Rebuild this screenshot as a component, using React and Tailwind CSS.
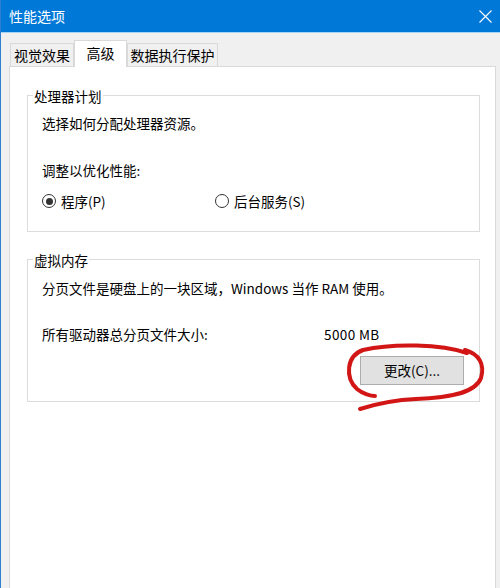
import React from "react";

const font = { fontFamily: '"Noto Sans CJK SC", "Noto Sans", sans-serif' };

function Radio({ checked, label }) {
  return (
    <div className="flex items-center gap-[5px]">
      <span className="w-[14px] h-[14px] rounded-full border border-[#333333] bg-white flex items-center justify-center">
        {checked && <span className="w-[7px] h-[7px] rounded-full bg-[#333333]" />}
      </span>
      <span>{label}</span>
    </div>
  );
}

function Group({ title, className, children }) {
  return (
    <div className={"relative border border-[#dcdcdc] " + className}>
      <span className="absolute left-[5px] top-[-9px] bg-white px-px leading-[18px]">{title}</span>
      {children}
    </div>
  );
}

export default function App() {
  return (
    <div
      className="w-[500px] h-[588px] overflow-hidden bg-[#f0f0f0] border-l border-[#2f7fcf] relative text-[13.5px] text-black"
      style={font}
    >
      {/* title bar */}
      <div className="h-[32px] bg-[#0078d7] flex items-center justify-between pl-[8px] pr-[8px]">
        <span className="text-white text-[14px] leading-[18px]">性能选项</span>
        <svg width="13" height="13" viewBox="0 0 13 13">
          <path d="M0.5 0.5 L12.5 12.5 M12.5 0.5 L0.5 12.5" stroke="#ffffff" strokeWidth="1.1" fill="none" />
        </svg>
      </div>
      <div className="h-px bg-[#a9d3f3]" />

      {/* tabs */}
      <div className="flex items-end h-[33px] pl-[9px]">
        <div className="w-[64px] h-[23px] border border-[#d9d9d9] border-b-0 flex items-center justify-center text-[14px] bg-[#f0f0f0]">
          视觉效果
        </div>
        <div className="w-[53px] h-[27px] -mb-px relative z-10 bg-white border border-[#d9d9d9] border-b-0 flex items-start pt-[2px] justify-center text-[14px]">
          高级
        </div>
        <div className="w-[91px] h-[23px] border border-[#d9d9d9] border-b-0 flex items-center justify-center text-[14px] bg-[#f0f0f0]">
          数据执行保护
        </div>
      </div>

      {/* panel */}
      <div className="ml-[8px] w-[487px] h-[600px] bg-white border border-[#d9d9d9] pt-[28px] pl-[17px]">
        <Group title="处理器计划" className="w-[453px] pt-[18px] pl-[14px] pb-[21px]">
          <div className="leading-[18px]">选择如何分配处理器资源。</div>
          <div className="leading-[18px] mt-[29px]">调整以优化性能:</div>
          <div className="flex items-center leading-[18px] mt-[13px]">
            <div className="w-[173px]">
              <Radio checked label="程序(P)" />
            </div>
            <Radio label="后台服务(S)" />
          </div>
        </Group>

        <Group title="虚拟内存" className="w-[453px] mt-[27px] pt-[19px] pl-[14px] pr-[15px] pb-[16px]">
          <div className="leading-[18px]">分页文件是硬盘上的一块区域，Windows 当作 RAM 使用。</div>
          <div className="flex leading-[18px] mt-[28px]">
            <span className="w-[282px]">所有驱动器总分页文件大小:</span>
            <span className="tracking-[0.4px]">5000 MB</span>
          </div>
          <div className="flex justify-end mt-[13px]">
            <div className="w-[104px] h-[29px] bg-[#e1e1e1] border border-[#adadad] flex items-center justify-center">
              更改(C)...
            </div>
          </div>
        </Group>
      </div>

      {/* red hand-drawn annotation */}
      <svg className="absolute left-0 top-0 pointer-events-none" width="500" height="588" viewBox="0 0 500 588">
        <path
          d="M466 353 C440 344, 392 343, 362 350 C345 356, 344 378, 356 389 C362 394, 370 396, 374 396"
          stroke="#d21515"
          strokeWidth="4"
          fill="none"
          strokeLinecap="round"
        />
        <path
          d="M359 409 C378 403, 392 400, 415 399 C445 398, 474 394, 480 378 C484 364, 478 354, 464 350"
          stroke="#d21515"
          strokeWidth="4"
          fill="none"
          strokeLinecap="round"
        />
      </svg>
    </div>
  );
}
